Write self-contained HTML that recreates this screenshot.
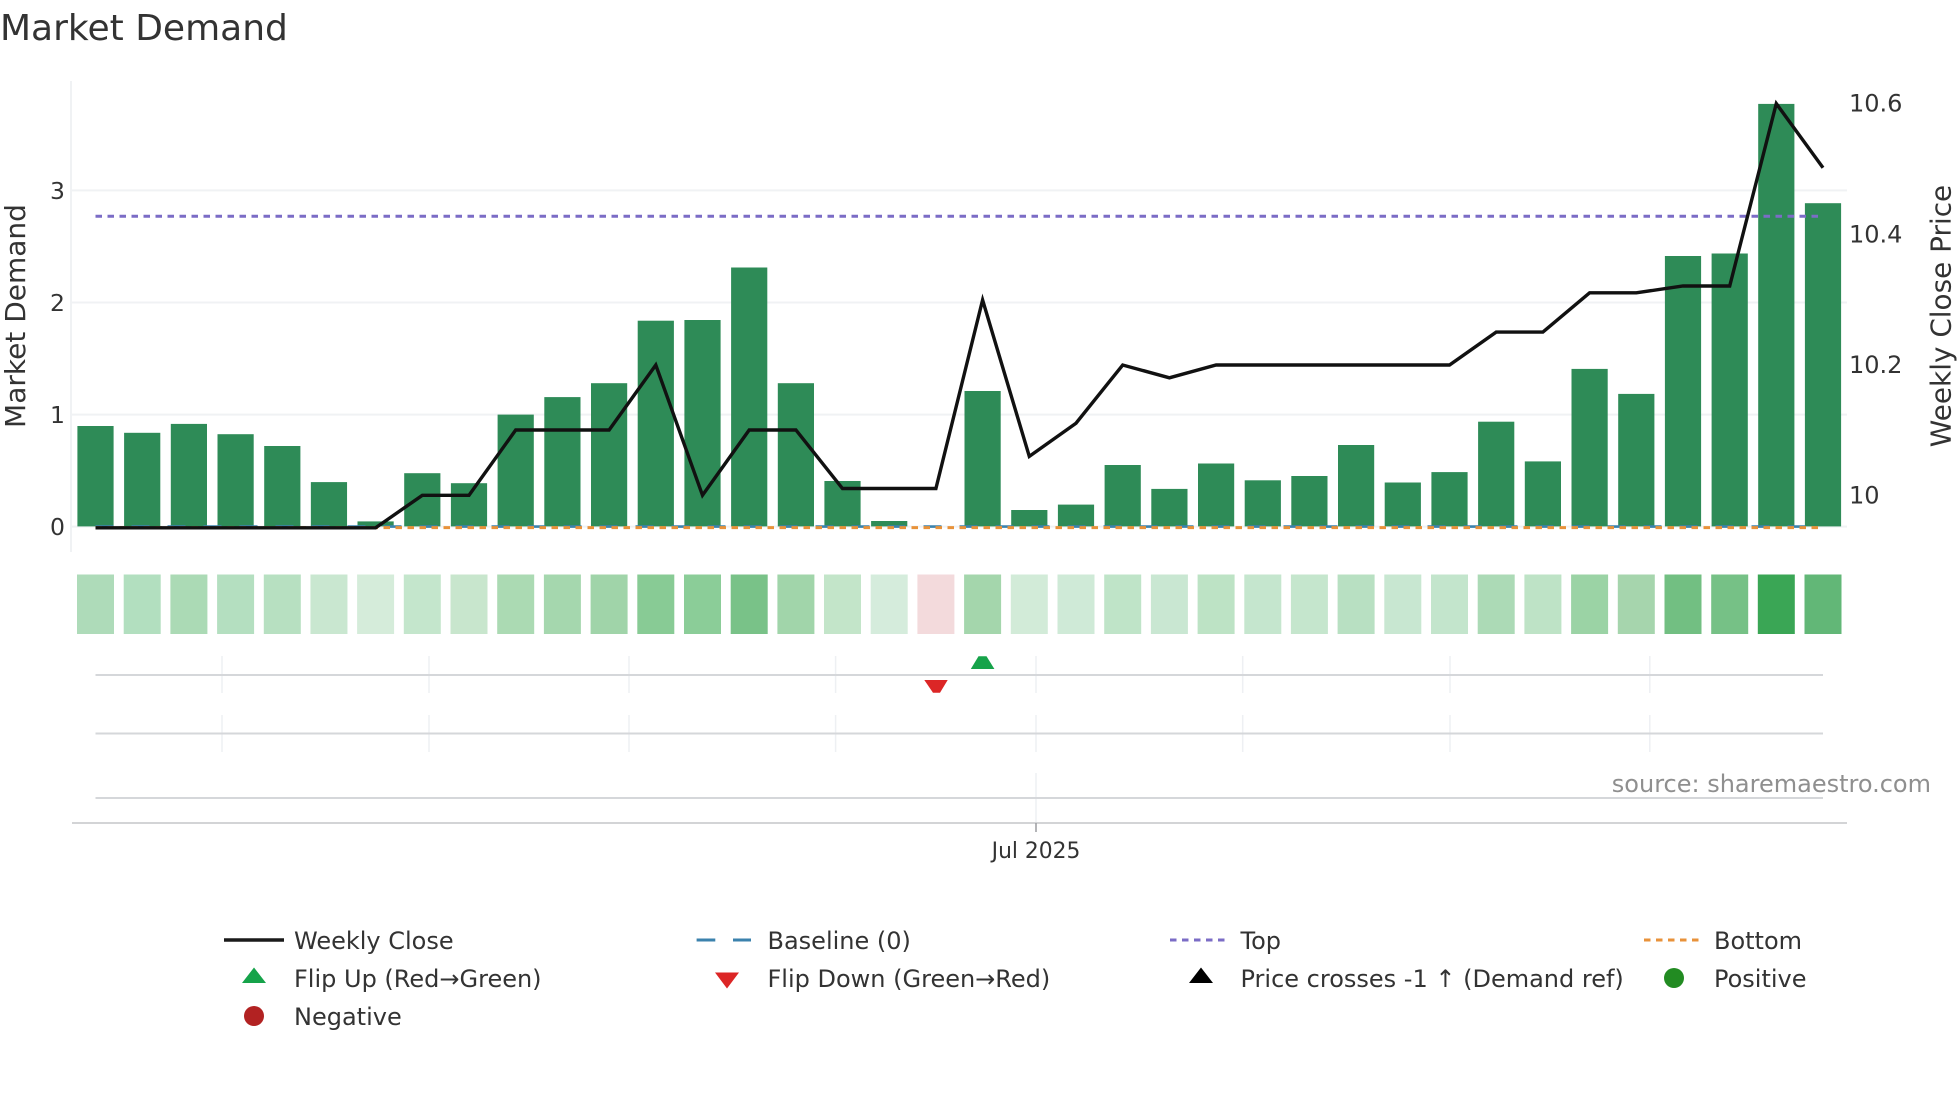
<!DOCTYPE html>
<html><head><meta charset="utf-8"><title>Market Demand</title>
<style>
html,body{margin:0;padding:0;background:#fff;width:1960px;height:1102px;overflow:hidden}
svg{display:block}
text{font-family:"DejaVu Sans","Liberation Sans",sans-serif;fill:#333}
</style></head><body>
<svg width="1960" height="1102" viewBox="0 0 1960 1102" xmlns="http://www.w3.org/2000/svg">
<rect width="1960" height="1102" fill="#fff"/>
<text x="0" y="40" font-size="36">Market Demand</text>

<g stroke="#f0f2f4" stroke-width="2" fill="none">
<path d="M71 81V552"/>
<path d="M71 190.4H1847M71 302.5H1847M71 414.6H1847M71 526.6H1847"/>
</g>

<g fill="#2e8b57">
<rect x="77.4" y="426" width="36.2" height="100.4"/><rect x="124.1" y="432.8" width="36.2" height="93.6"/><rect x="170.8" y="423.9" width="36.2" height="102.5"/><rect x="217.5" y="434.2" width="36.2" height="92.2"/><rect x="264.2" y="446" width="36.2" height="80.4"/><rect x="310.85" y="482.1" width="36.2" height="44.3"/><rect x="357.5" y="521.4" width="36.2" height="5"/><rect x="404.2" y="473.2" width="36.2" height="53.2"/><rect x="450.9" y="483.2" width="36.2" height="43.2"/><rect x="497.6" y="414.6" width="36.2" height="111.8"/><rect x="544.3" y="397.1" width="36.2" height="129.3"/><rect x="591" y="383.2" width="36.2" height="143.2"/><rect x="637.7" y="320.7" width="36.2" height="205.7"/><rect x="684.4" y="320" width="36.2" height="206.4"/><rect x="731.1" y="267.5" width="36.2" height="258.9"/><rect x="777.8" y="383.2" width="36.2" height="143.2"/><rect x="824.4" y="481" width="36.2" height="45.4"/><rect x="871.1" y="521" width="36.2" height="5.4"/><rect x="964.5" y="391" width="36.2" height="135.4"/><rect x="1011.2" y="510" width="36.2" height="16.4"/><rect x="1057.9" y="504.6" width="36.2" height="21.8"/><rect x="1104.6" y="465" width="36.2" height="61.4"/><rect x="1151.3" y="488.9" width="36.2" height="37.5"/><rect x="1198" y="463.5" width="36.2" height="62.9"/><rect x="1244.7" y="480.3" width="36.2" height="46.1"/><rect x="1291.3" y="476" width="36.2" height="50.4"/><rect x="1338" y="445" width="36.2" height="81.4"/><rect x="1384.7" y="482.5" width="36.2" height="43.9"/><rect x="1431.4" y="472.1" width="36.2" height="54.3"/><rect x="1478.1" y="421.7" width="36.2" height="104.7"/><rect x="1524.8" y="461.4" width="36.2" height="65"/><rect x="1571.5" y="368.9" width="36.2" height="157.5"/><rect x="1618.2" y="393.9" width="36.2" height="132.5"/><rect x="1664.9" y="256" width="36.2" height="270.4"/><rect x="1711.6" y="253.5" width="36.2" height="272.9"/><rect x="1758.2" y="103.9" width="36.2" height="422.5"/><rect x="1804.9" y="203.2" width="36.2" height="323.2"/>
</g>

<path d="M95.5 526.6H1823" stroke="#3b82ad" stroke-width="2.6" stroke-dasharray="18 18" fill="none"/>
<path d="M95.5 216.3H1823" stroke="#7b6cc6" stroke-width="3" stroke-dasharray="6.5 5.5" fill="none"/>
<path d="M95.5 527.6H1823" stroke="#e8923a" stroke-width="3" stroke-dasharray="6.5 5.5" fill="none"/>
<polyline fill="none" stroke="#111" stroke-width="3.4" stroke-linejoin="miter" points="95.5,527.8 142.2,527.8 188.9,527.8 235.6,527.8 282.3,527.8 329,527.8 375.6,527.8 422.3,495.3 469,495.3 515.7,430 562.4,430 609.1,430 655.8,365 702.5,495.3 749.2,430 795.9,430 842.5,488.5 889.2,488.5 935.9,488.5 982.6,300 1029.3,456.4 1076,423.2 1122.7,365 1169.4,377.8 1216.1,365 1262.8,365 1309.4,365 1356.1,365 1402.8,365 1449.5,365 1496.2,332.1 1542.9,332.1 1589.6,292.8 1636.3,292.8 1683,286 1729.7,286 1776.3,103.6 1823,167.8"/>

<g font-size="23.5" text-anchor="end">
<text x="65" y="198.8">3</text><text x="65" y="311">2</text><text x="65" y="423">1</text><text x="65" y="535">0</text>
</g>
<g font-size="24">
<text x="1849" y="111.6">10.6</text><text x="1849" y="242.6">10.4</text><text x="1849" y="373">10.2</text><text x="1849" y="503.5">10</text>
</g>
<text transform="translate(25 316) rotate(-90)" font-size="28" text-anchor="middle">Market Demand</text>
<text transform="translate(1950.5 316) rotate(-90)" font-size="27.9" text-anchor="middle">Weekly Close Price</text>

<g>
<rect x="77" y="574.5" width="37" height="59.5" fill="#aedbb9"/><rect x="123.7" y="574.5" width="37" height="59.5" fill="#b2dfbf"/><rect x="170.4" y="574.5" width="37" height="59.5" fill="#abdab5"/><rect x="217.1" y="574.5" width="37" height="59.5" fill="#b4dfc0"/><rect x="263.8" y="574.5" width="37" height="59.5" fill="#b7e0c1"/><rect x="310.45" y="574.5" width="37" height="59.5" fill="#c9e7d0"/><rect x="357.1" y="574.5" width="37" height="59.5" fill="#d5ecda"/><rect x="403.8" y="574.5" width="37" height="59.5" fill="#c4e6cc"/><rect x="450.5" y="574.5" width="37" height="59.5" fill="#c8e6cd"/><rect x="497.2" y="574.5" width="37" height="59.5" fill="#abdab3"/><rect x="543.9" y="574.5" width="37" height="59.5" fill="#a5d7ae"/><rect x="590.6" y="574.5" width="37" height="59.5" fill="#a0d4a9"/><rect x="637.3" y="574.5" width="37" height="59.5" fill="#88cb95"/><rect x="684" y="574.5" width="37" height="59.5" fill="#8bcd98"/><rect x="730.7" y="574.5" width="37" height="59.5" fill="#79c288"/><rect x="777.4" y="574.5" width="37" height="59.5" fill="#a1d5aa"/><rect x="824" y="574.5" width="37" height="59.5" fill="#c3e5c9"/><rect x="870.7" y="574.5" width="37" height="59.5" fill="#d5ecdc"/><rect x="917.4" y="574.5" width="37" height="59.5" fill="#f3dadc"/><rect x="964.1" y="574.5" width="37" height="59.5" fill="#a4d6ac"/><rect x="1010.8" y="574.5" width="37" height="59.5" fill="#d2ebd8"/><rect x="1057.5" y="574.5" width="37" height="59.5" fill="#cfead7"/><rect x="1104.2" y="574.5" width="37" height="59.5" fill="#bfe4c8"/><rect x="1150.9" y="574.5" width="37" height="59.5" fill="#c9e7d2"/><rect x="1197.6" y="574.5" width="37" height="59.5" fill="#bde3c5"/><rect x="1244.3" y="574.5" width="37" height="59.5" fill="#c5e6ce"/><rect x="1290.9" y="574.5" width="37" height="59.5" fill="#c5e6cd"/><rect x="1337.6" y="574.5" width="37" height="59.5" fill="#b8e0c2"/><rect x="1384.3" y="574.5" width="37" height="59.5" fill="#c8e7d1"/><rect x="1431" y="574.5" width="37" height="59.5" fill="#c3e5cc"/><rect x="1477.7" y="574.5" width="37" height="59.5" fill="#acdab6"/><rect x="1524.4" y="574.5" width="37" height="59.5" fill="#bee3c6"/><rect x="1571.1" y="574.5" width="37" height="59.5" fill="#9bd3a5"/><rect x="1617.8" y="574.5" width="37" height="59.5" fill="#a6d5ad"/><rect x="1664.5" y="574.5" width="37" height="59.5" fill="#72bf82"/><rect x="1711.2" y="574.5" width="37" height="59.5" fill="#76c186"/><rect x="1757.8" y="574.5" width="37" height="59.5" fill="#3aa655"/><rect x="1804.5" y="574.5" width="37" height="59.5" fill="#62b777"/>
</g>

<g stroke="#eef0f3" stroke-width="1.5" fill="none">
<path d="M222 656V693M429 656V693M629 656V693M835.6 656V693M1036 656V693M1242.7 656V693M1450 656V693M1649.8 656V693"/>
<path d="M222 715V752M429 715V752M629 715V752M835.6 715V752M1036 715V752M1242.7 715V752M1450 715V752M1649.8 715V752"/>
<path d="M1036 773V823"/>
</g>
<g stroke="#d5d7da" stroke-width="2" fill="none">
<path d="M95.5 675H1823M95.5 733.5H1823M95.5 798H1823"/>
<path d="M72 823H1847" stroke="#d3d4d6"/>
</g>
<path d="M1036 823V832" stroke="#9a9ca0" stroke-width="1.5"/>

<polygon points="978.5,656.2 986.5,656.2 994.4,669 970.8,669" fill="#16a34a"/>
<polygon points="924.3,680 947.7,680 940,692.7 933,692.7" fill="#dc2626"/>

<text x="1036" y="858" font-size="21.8" text-anchor="middle">Jul 2025</text>
<text x="1931" y="792" font-size="24" text-anchor="end" style="fill:#8f8f8f">source: sharemaestro.com</text>

<path d="M224 940H284" stroke="#1a1a1a" stroke-width="3.4"/>
<path d="M696.6 940H751" stroke="#3b82ad" stroke-width="3" stroke-dasharray="18.7 17.7"/>
<path d="M1170 940H1226" stroke="#7b6cc6" stroke-width="3" stroke-dasharray="6.5 5.5"/>
<path d="M1644 940H1700" stroke="#e8923a" stroke-width="3" stroke-dasharray="6.5 5.5"/>
<polygon points="254,967.5 266,983 242,983" fill="#16a34a"/>
<polygon points="715,972.5 739,972.5 727,988.5" fill="#dc2626"/>
<polygon points="1201,967.5 1213,983 1189,983" fill="#000"/>
<circle cx="1674" cy="978" r="10" fill="#228b22"/>
<circle cx="254" cy="1016" r="10" fill="#b22222"/>

<g font-size="24">
<text x="294" y="949">Weekly Close</text>
<text x="767.5" y="949">Baseline (0)</text>
<text x="1240.5" y="949">Top</text>
<text x="1714" y="949">Bottom</text>
<text x="294" y="987">Flip Up (Red→Green)</text>
<text x="767.5" y="987">Flip Down (Green→Red)</text>
<text x="1240.5" y="987">Price crosses -1 ↑ (Demand ref)</text>
<text x="1714" y="987">Positive</text>
<text x="294" y="1025">Negative</text>
</g>
</svg>
</body></html>
